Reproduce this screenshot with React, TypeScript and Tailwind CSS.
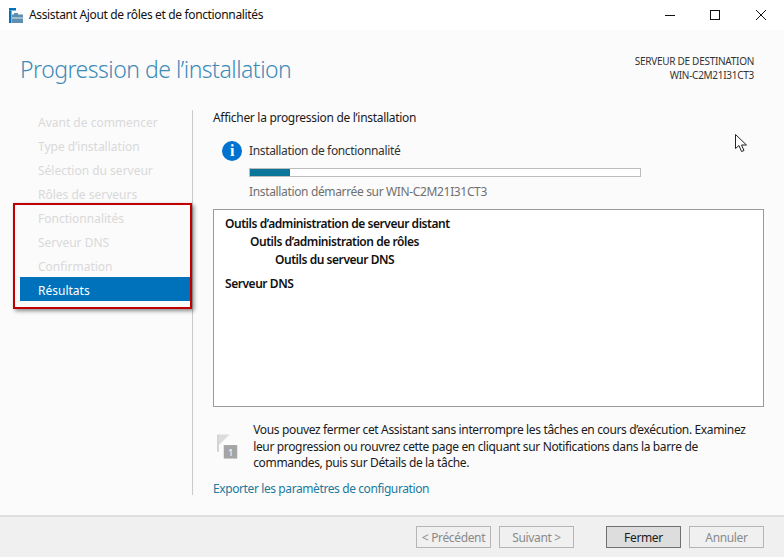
const steps = [
  'Avant de commencer',
  "Type d’installation",
  'Sélection du serveur',
  'Rôles de serveurs',
  'Fonctionnalités',
  'Serveur DNS',
  'Confirmation',
];

function AppIcon() {
  return (
    <svg width="15" height="15" viewBox="0 0 15 15" className="mr-[5px] shrink-0">
      <rect x="0" y="0" width="7" height="2.5" fill="#0072bc" />
      <rect x="0" y="2.5" width="2.5" height="12.5" fill="#0072bc" />
      <path d="M5 5h4v1.5h5V15H3V6.5h2z" fill="#5f8fb0" />
      <rect x="3" y="9.5" width="11" height="1" fill="#dfe9f0" />
    </svg>
  );
}

function FlagIcon() {
  return (
    <svg width="22" height="26" viewBox="0 0 22 26">
      <path d="M0 0h2v18H0z" fill="#d2d2d2" />
      <path d="M2 0H13L7 6l-5 5z" fill="#dcdcdc" />
      <rect x="7" y="11" width="14" height="14" fill="#a5a5a5" />
      <text x="14" y="22" fontSize="10" textAnchor="middle" fill="#fff" fontFamily="Noto Sans, sans-serif">
        1
      </text>
    </svg>
  );
}

function WizardButton({ label, active }: { label: string; active?: boolean }) {
  return (
    <button
      className={`h-[22px] w-[75px] border pt-[1px] text-[12px] leading-[18px] ${
        active
          ? 'border-[#707070] bg-[#dddddd] text-[#1a1a1a]'
          : 'border-[#b5b5b5] bg-[#f0f0f0] text-[#8a8a8a]'
      }`}
    >
      {label}
    </button>
  );
}

export default function App() {
  return (
    <div className="relative flex h-[557px] w-[784px] flex-col overflow-hidden bg-[#fbfbfb] font-['Noto_Sans',sans-serif] text-[12px] tracking-[-0.35px] text-[#1a1a1a]">
      <div className="flex h-[30px] shrink-0 items-center bg-white pl-[9px]">
        <AppIcon />
        <span className="text-[12px] text-[#111]">Assistant Ajout de rôles et de fonctionnalités</span>
        <div className="ml-auto flex items-center pr-[17px]">
          <svg width="102" height="12" viewBox="0 0 102 12" fill="none" stroke="#111" strokeWidth="1">
            <path d="M0 6.5h10" />
            <rect x="45.5" y="1.5" width="9" height="9" />
            <path d="M91 1l10 10M101 1L91 11" />
          </svg>
        </div>
      </div>

      <div className="flex h-[79px] shrink-0 items-start justify-between pl-[20px] pr-[30px]">
        <h1 className="mt-[21px] text-[23px] font-light leading-[36px] tracking-[-0.5px] text-[#3e8bb8]">
          Progression de l’installation
        </h1>
        <div className="mt-[25px] text-right text-[10px] leading-[13.5px] tracking-[-0.28px] text-[#333]">
          <div>SERVEUR DE DESTINATION</div>
          <div>WIN-C2M21I31CT3</div>
        </div>
      </div>

      <div className="flex min-h-0 flex-1">
        <div className="w-[173px] shrink-0 pl-[20px] tracking-normal">
          <div className="w-[170px]">
            {steps.map((step) => (
              <div key={step} className="flex h-[24px] items-center pl-[18px] pt-[4px] text-[#d9d9d9]">
                {step}
              </div>
            ))}
            <div className="flex h-[24px] items-center bg-[#0072bc] pl-[18px] pt-[4px] text-white">Résultats</div>
          </div>
        </div>

        <div className="ml-[19px] mb-[20px] mt-[1px] w-px shrink-0 bg-[#c9c9c9]" />

        <div className="flex min-w-0 flex-1 flex-col pl-[20px] pr-[20px] pt-[1px]">
          <div className="leading-[16px] tracking-[-0.3px]">Afficher la progression de l’installation</div>

          <div className="mt-[15px] flex pl-[9px]">
            <div className="flex h-[20px] w-[20px] shrink-0 items-center justify-center rounded-full bg-[#0072d0] font-['Liberation_Serif',serif] text-[16px] font-bold leading-none text-white">
              i
            </div>
            <div className="ml-[7px] flex-1">
              <div className="pt-[2px] leading-[16px] text-[#333]">Installation de fonctionnalité</div>
              <div className="mt-[9px] h-[9px] w-[392px] border border-[#bcbcbc] bg-white">
                <div className="h-full w-[40px] bg-[#0b7699]" />
              </div>
              <div className="mt-[7px] leading-[16px] text-[#707070]">Installation démarrée sur WIN-C2M21I31CT3</div>
            </div>
          </div>

          <div className="mt-[9px] h-[198px] w-[551px] border border-[#9b9b9b] bg-white pl-[11px] pt-[5px] font-semibold tracking-[-0.45px] text-[#111]">
            <div className="h-[18px] leading-[18px]">Outils d’administration de serveur distant</div>
            <div className="h-[18px] pl-[25px] leading-[18px]">Outils d’administration de rôles</div>
            <div className="h-[18px] pl-[50px] leading-[18px]">Outils du serveur DNS</div>
            <div className="mt-[6px] h-[18px] leading-[18px]">Serveur DNS</div>
          </div>

          <div className="mt-[15px] flex items-center pl-[4px]">
            <FlagIcon />
            <p className="ml-[15px] w-[530px] leading-[16.5px] text-[#1a1a1a]">
              Vous pouvez fermer cet Assistant sans interrompre les tâches en cours d’exécution. Examinez
              <br />
              leur progression ou rouvrez cette page en cliquant sur Notifications dans la barre de
              <br />
              commandes, puis sur Détails de la tâche.
            </p>
          </div>

          <div className="mt-[9px] leading-[16px] tracking-[-0.4px] text-[#1a7a9e]">Exporter les paramètres de configuration</div>
        </div>
      </div>

      <div className="flex h-[42px] shrink-0 items-center border-t-2 border-[#dedede] bg-[#f0f0f0] pl-[416px]">
        <WizardButton label="< Précédent" />
        <div className="ml-[8px]">
          <WizardButton label="Suivant >" />
        </div>
        <div className="ml-[32px]">
          <WizardButton label="Fermer" active />
        </div>
        <div className="ml-[8px]">
          <WizardButton label="Annuler" />
        </div>
      </div>

      {/* annotation drawn over the screenshot */}
      <div className="absolute left-[13px] top-[203px] h-[106px] w-[179px] border-2 border-[#c00000] shadow-[2px_2px_4px_rgba(0,0,0,0.45)]" />

      <svg width="14" height="20" viewBox="0 0 14 20" className="absolute left-[735px] top-[134px]">
        <path d="M0.5 0.5v14l3.5-3 2.5 6 2.5-1-2.5-5.5h5z" fill="#fff" stroke="#222" strokeWidth="1" />
      </svg>
    </div>
  );
}
